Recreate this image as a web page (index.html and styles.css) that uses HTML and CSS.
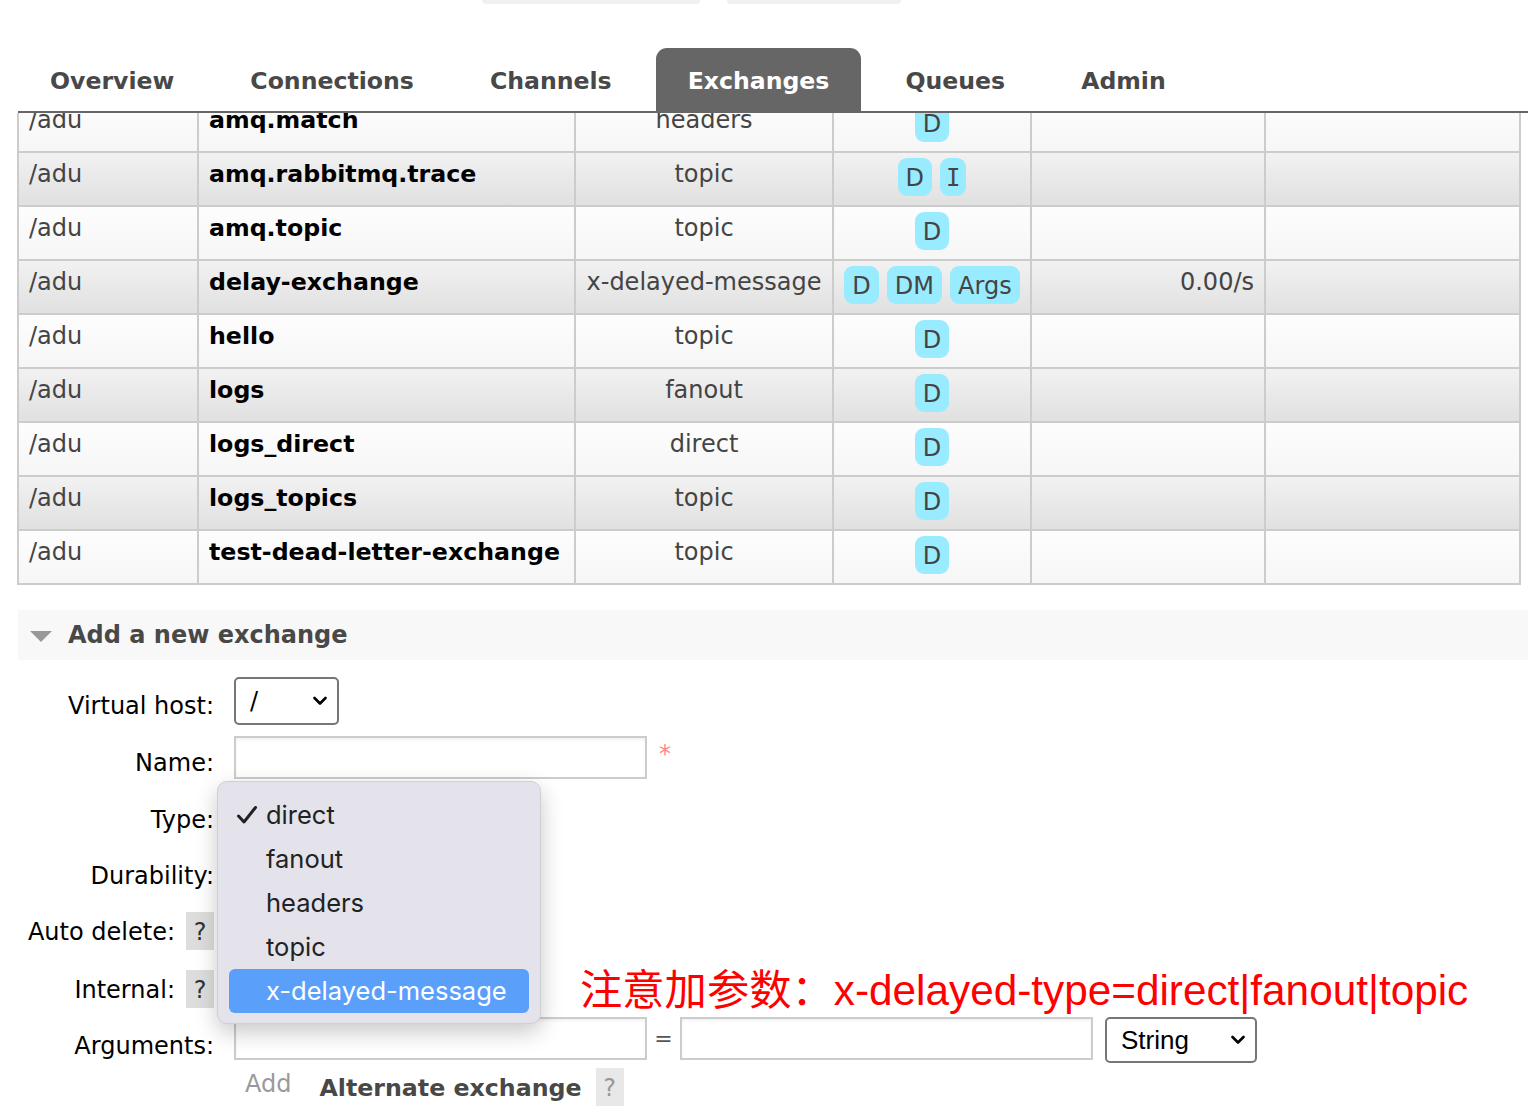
FILE: index.html
```html
<!DOCTYPE html>
<html lang="en">
<head>
<meta charset="utf-8">
<title>Exchanges</title>
<link rel="stylesheet" href="styles.css">
</head>
<body>
<header class="top">
  <div class="topbar"><span class="pill pill-a"></span><span class="pill pill-b"></span></div>
  <nav class="tabs">
    <a class="tab">Overview</a>
    <a class="tab">Connections</a>
    <a class="tab">Channels</a>
    <a class="tab active">Exchanges</a>
    <a class="tab">Queues</a>
    <a class="tab">Admin</a>
  </nav>
</header>

<main class="main">
  <table class="list">
    <colgroup>
      <col class="c-vh"><col class="c-name"><col class="c-type"><col class="c-feat"><col class="c-in"><col class="c-out">
    </colgroup>
    <tbody>
      <tr class="alt1"><td class="vh">/adu</td><td class="nm">amq.match</td><td class="ty">headers</td><td><div class="feat"><span class="badge">D</span></div></td><td class="rate"></td><td></td></tr>
      <tr class="alt2"><td class="vh">/adu</td><td class="nm">amq.rabbitmq.trace</td><td class="ty">topic</td><td><div class="feat"><span class="badge">D</span><span class="badge badge-i">I</span></div></td><td class="rate"></td><td></td></tr>
      <tr class="alt1"><td class="vh">/adu</td><td class="nm">amq.topic</td><td class="ty">topic</td><td><div class="feat"><span class="badge">D</span></div></td><td class="rate"></td><td></td></tr>
      <tr class="alt2"><td class="vh">/adu</td><td class="nm">delay-exchange</td><td class="ty">x-delayed-message</td><td><div class="feat"><span class="badge">D</span><span class="badge">DM</span><span class="badge">Args</span></div></td><td class="rate">0.00/s</td><td></td></tr>
      <tr class="alt1"><td class="vh">/adu</td><td class="nm">hello</td><td class="ty">topic</td><td><div class="feat"><span class="badge">D</span></div></td><td class="rate"></td><td></td></tr>
      <tr class="alt2"><td class="vh">/adu</td><td class="nm">logs</td><td class="ty">fanout</td><td><div class="feat"><span class="badge">D</span></div></td><td class="rate"></td><td></td></tr>
      <tr class="alt1"><td class="vh">/adu</td><td class="nm">logs_direct</td><td class="ty">direct</td><td><div class="feat"><span class="badge">D</span></div></td><td class="rate"></td><td></td></tr>
      <tr class="alt2"><td class="vh">/adu</td><td class="nm">logs_topics</td><td class="ty">topic</td><td><div class="feat"><span class="badge">D</span></div></td><td class="rate"></td><td></td></tr>
      <tr class="alt1"><td class="vh">/adu</td><td class="nm">test-dead-letter-exchange</td><td class="ty">topic</td><td><div class="feat"><span class="badge">D</span></div></td><td class="rate"></td><td></td></tr>
    </tbody>
  </table>

  <section class="section">
    <h2 class="section-head"><span class="tri"></span>Add a new exchange</h2>
    <form class="form">
      <label class="lbl">Virtual host:</label>
      <div class="ctl">
        <div class="sel sel-vh"><span>/</span><svg class="chev" viewBox="0 0 14 10" width="14" height="10"><path d="M1.5 2 L7 7.5 L12.5 2" fill="none" stroke="#000" stroke-width="2.6" stroke-linecap="round" stroke-linejoin="round"/></svg></div>
      </div>

      <label class="lbl lbl-name">Name:</label>
      <div class="ctl ctl-row">
        <div class="inp inp-wide"></div><span class="req">*</span>
      </div>

      <label class="lbl">Type:</label>
      <div class="ctl">
        <div class="menu">
          <div class="opt"><svg class="check" viewBox="0 0 22 20" width="22" height="20"><path d="M2.5 11 L8 17 L19.5 2.5" fill="none" stroke="#222" stroke-width="3" stroke-linecap="round" stroke-linejoin="round"/></svg>direct</div>
          <div class="opt">fanout</div>
          <div class="opt">headers</div>
          <div class="opt">topic</div>
          <div class="opt opt-hi">x-delayed-message</div>
        </div>
      </div>

      <label class="lbl">Durability:</label>
      <div class="ctl"></div>

      <label class="lbl">Auto delete:<span class="help">?</span></label>
      <div class="ctl"></div>

      <label class="lbl">Internal:<span class="help">?</span></label>
      <div class="ctl"></div>

      <label class="lbl">Arguments:</label>
      <div class="ctl ctl-row">
        <div class="inp inp-wide"></div><span class="eq">=</span><div class="inp inp-wide"></div>
        <div class="sel sel-str"><span>String</span><svg class="chev" viewBox="0 0 14 10" width="14" height="10"><path d="M1.5 2 L7 7.5 L12.5 2" fill="none" stroke="#000" stroke-width="2.6" stroke-linecap="round" stroke-linejoin="round"/></svg></div>
      </div>

      <span class="lbl"></span>
      <div class="ctl ctl-add">
        <span class="add">Add</span><b class="alt">Alternate exchange</b><span class="help help-faint">?</span>
      </div>
    </form>
    <p class="note">注意加参数：x-delayed-type=direct|fanout|topic</p>
  </section>
</main>
</body>
</html>
```

FILE: styles.css
```css
html, body {
  margin: 0;
  padding: 0;
  background: #fff;
}
body {
  font-family: "DejaVu Sans", Verdana, sans-serif;
  font-size: 24px;
  color: #484848;
  overflow: hidden;
}

/* ---------- header ---------- */
.top {
  position: fixed;
  top: 0;
  left: 0;
  right: 0;
  height: 113px;
  background: #fff;
  z-index: 5;
}
.topbar {
  display: flex;
  gap: 27px;
  padding-left: 482px;
  height: 4px;
}
.pill {
  display: block;
  height: 4px;
  background: #f0f0f0;
  border-radius: 0 0 6px 6px;
}
.pill-a { width: 218px; }
.pill-b { width: 174px; }

.tabs {
  display: flex;
  gap: 12px;
  margin: 44px 0 0 18px;
  height: 63px;
  border-bottom: 2px solid #666;
}
.tab {
  display: block;
  padding: 0 32px;
  line-height: 67px;
  font-weight: bold;
  font-size: 23.6px;
  color: #484848;
  border-radius: 11px 11px 0 0;
}
.tab.active {
  background: #666;
  color: #fff;
}

/* ---------- table ---------- */
.main {
  padding-top: 97px;
}
.list {
  margin-left: 17px;
  width: 1502px;
  table-layout: fixed;
  border-collapse: collapse;
}
.c-vh { width: 180px; }
.c-name { width: 377px; }
.c-type { width: 258px; }
.c-feat { width: 198px; }
.c-in { width: 234px; }
.c-out { width: 255px; }

.list td {
  border: 2px solid #ccc;
  height: 47px;
  padding: 5px 10px 0;
  vertical-align: top;
  line-height: 33px;
  white-space: nowrap;
  overflow: hidden;
}
.list tr.alt1 { background: linear-gradient(#fdfdfd, #f6f6f6); }
.list tr.alt2 { background: linear-gradient(#f2f2f2, #e0e0e0); }
.vh { color: #444; }
.nm { color: #000; font-weight: bold; font-size: 23.7px; }
.nm { padding-left: 11px; }
.ty { color: #444; text-align: center; }
.rate { color: #444; text-align: right; }
.feat {
  display: flex;
  justify-content: center;
  gap: 8px;
}
.badge {
  display: block;
  height: 38px;
  line-height: 41px;
  padding: 0 8px;
  border-radius: 9px;
  background: #99ebff;
  color: #444;
}
.badge-i {
  font-family: "DejaVu Sans Mono", monospace;
  padding: 0 6px;
}

/* ---------- section ---------- */
.section {
  position: relative;
  margin-top: 25px;
}
.section-head {
  display: flex;
  align-items: center;
  margin: 0 0 0 18px;
  height: 50px;
  background: #f8f8f8;
  font-size: 24px;
  font-weight: bold;
  color: #484848;
}
.tri {
  width: 0;
  height: 0;
  margin: 2px 16px 0 12px;
  border-left: 11px solid transparent;
  border-right: 11px solid transparent;
  border-top: 11px solid #999;
}

.form {
  display: grid;
  grid-template-columns: 196px 1fr;
  grid-template-rows: 59px 55px 56px 56px 58px 56px 51px 50px;
  column-gap: 20px;
  margin: 17px 0 0 18px;
}
.lbl {
  display: flex;
  justify-content: flex-end;
  align-items: flex-start;
  padding-top: 14px;
  line-height: 30px;
  color: #000;
  white-space: nowrap;
}
.lbl-name { padding-top: 12px; }
.ctl { position: relative; }
.ctl-row {
  display: flex;
  align-items: flex-start;
}
.sel {
  box-sizing: border-box;
  display: flex;
  align-items: center;
  justify-content: space-between;
  height: 48px;
  padding: 0 10px 0 14px;
  border: 2px solid #767676;
  border-radius: 5px;
  background: #fff;
  color: #000;
}
.sel-vh { width: 105px; }
.sel-str {
  width: 152px;
  height: 46px;
  margin-left: 12px;
  font-family: "Liberation Sans", Arial, sans-serif;
  font-size: 26px;
}
.chev { display: block; }
.inp {
  box-sizing: border-box;
  height: 43px;
  border: 2px solid #ccc;
  background: #fff;
  box-shadow: inset 0 2px 3px rgba(0,0,0,0.05);
}
.inp-wide { width: 413px; }
.req {
  margin: 4px 0 0 12px;
  color: #f88;
  font-size: 24px;
}
.eq {
  width: 33px;
  text-align: center;
  line-height: 44px;
  font-size: 22px;
  color: #555;
}
.help {
  display: inline-block;
  margin: -5px 0 0 11px;
  width: 28px;
  height: 38px;
  line-height: 40px;
  text-align: center;
  background: #ddd;
  color: #333;
}
.help-faint {
  background: #e8e8e8;
  color: #999;
  margin: 0 0 0 14px;
}
.ctl-add {
  display: flex;
  align-items: flex-start;
  padding-left: 11px;
}
.add {
  color: #999;
  line-height: 32px;
}
.alt {
  margin-left: 28px;
  padding-top: 4px;
  line-height: 32px;
  font-size: 23.7px;
  color: #484848;
}

/* ---------- dropdown menu ---------- */
.menu {
  position: absolute;
  left: -17px;
  top: -10px;
  width: 324px;
  box-sizing: border-box;
  padding: 11px 11px 10px;
  background: #e4e3eb;
  border: 1px solid #cfcfd4;
  border-radius: 10px;
  box-shadow: 0 8px 22px rgba(0,0,0,0.22);
  font-family: Inter, "Noto Sans", sans-serif;
  font-size: 25.5px;
  color: #222;
  z-index: 3;
}
.opt {
  position: relative;
  height: 44px;
  line-height: 44px;
  padding-left: 37px;
  border-radius: 6px;
}
.opt-hi {
  background: #5aa0fa;
  color: #fff;
}
.check {
  position: absolute;
  left: 7px;
  top: 12px;
}

/* ---------- annotation ---------- */
.note {
  position: absolute;
  left: 580px;
  top: 356px;
  margin: 0;
  font-family: "Liberation Sans", "Noto Sans CJK SC", sans-serif;
  font-size: 42.3px;
  line-height: 50px;
  color: #f00;
  white-space: nowrap;
}
```
